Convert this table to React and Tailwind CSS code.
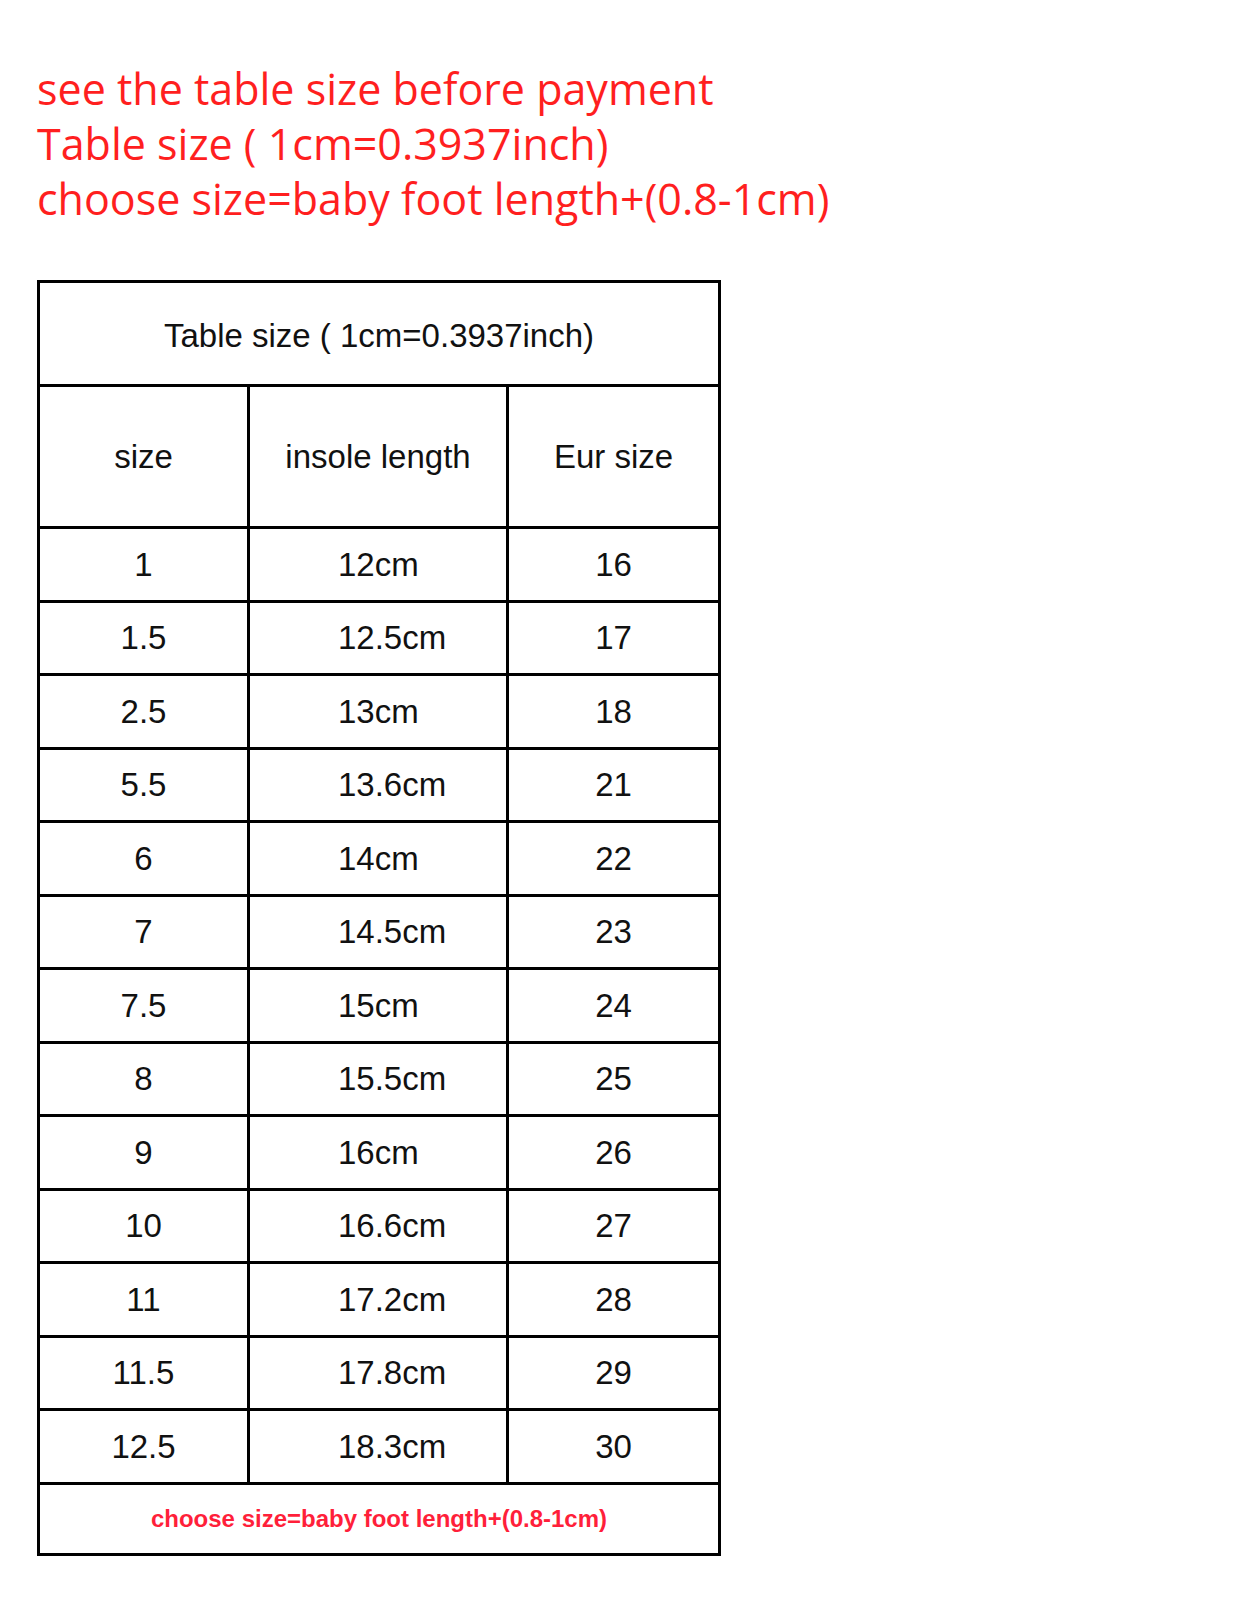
import React from 'react';

const rows = [
  ['1', '12cm', '16'],
  ['1.5', '12.5cm', '17'],
  ['2.5', '13cm', '18'],
  ['5.5', '13.6cm', '21'],
  ['6', '14cm', '22'],
  ['7', '14.5cm', '23'],
  ['7.5', '15cm', '24'],
  ['8', '15.5cm', '25'],
  ['9', '16cm', '26'],
  ['10', '16.6cm', '27'],
  ['11', '17.2cm', '28'],
  ['11.5', '17.8cm', '29'],
  ['12.5', '18.3cm', '30'],
];

const App = () => {
  return (
    <div className="min-h-[1600px] w-[1242px] bg-white">
      {/* Red notes */}
      <div
        className="pl-[37px] pt-[61px] text-[43px] leading-[55px] text-[#ff1f1f]"
        style={{ fontFamily: '"Open Sans", sans-serif' }}
      >
        <p>see the table size before payment</p>
        <p>Table size ( 1cm=0.3937inch)</p>
        <p>choose size=baby foot length+(0.8-1cm)</p>
      </div>

      {/* Size table */}
      <div
        className="ml-[37px] mt-[54px] grid w-[684px] grid-cols-[207px_256px_209px] gap-[3px] bg-black p-[3px] text-[33px] text-[#111]"
        style={{ fontFamily: '"Liberation Sans", Arial, sans-serif' }}
      >
        <div className="col-span-3 flex h-[101px] items-center justify-center bg-white pt-[4px]">
          Table size ( 1cm=0.3937inch)
        </div>
        <div className="flex h-[139px] items-center justify-center bg-white">size</div>
        <div className="flex h-[139px] items-center justify-center bg-white">insole length</div>
        <div className="flex h-[139px] items-center justify-center bg-white">Eur size</div>
        {rows.map(([s, len, eur], i) => {
          const h = i % 2 === 0 ? 'h-[71px]' : 'h-[70px]';
          return (
            <React.Fragment key={s}>
              <div className={`flex ${h} items-center justify-center bg-white`}>{s}</div>
              <div className={`flex ${h} items-center bg-white pl-[88px]`}>{len}</div>
              <div className={`flex ${h} items-center justify-center bg-white`}>{eur}</div>
            </React.Fragment>
          );
        })}
        <div className="col-span-3 flex h-[68px] items-center justify-center bg-white text-[24px] font-bold text-[#ff1f3a]">
          choose size=baby foot length+(0.8-1cm)
        </div>
      </div>
    </div>
  );
};

export default App;
